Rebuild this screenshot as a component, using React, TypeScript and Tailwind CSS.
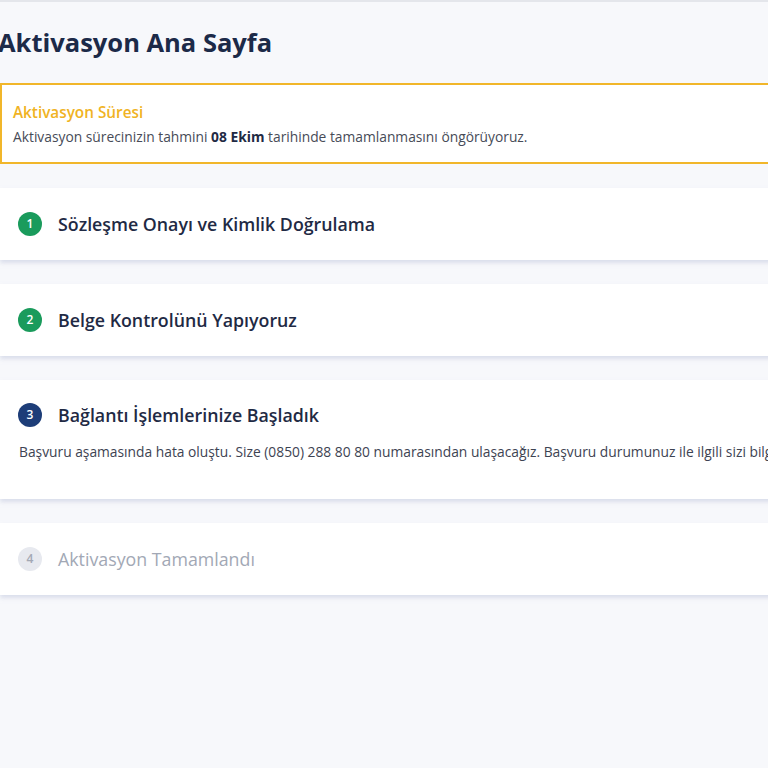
import React from "react";

type Step = {
  no: number;
  title: string;
  state: "done" | "active" | "todo";
  desc?: string;
};

const steps: Step[] = [
  { no: 1, title: "Sözleşme Onayı ve Kimlik Doğrulama", state: "done" },
  { no: 2, title: "Belge Kontrolünü Yapıyoruz", state: "done" },
  {
    no: 3,
    title: "Bağlantı İşlemlerinize Başladık",
    state: "active",
    desc: "Başvuru aşamasında hata oluştu. Size (0850) 288 80 80 numarasından ulaşacağız. Başvuru durumunuz ile ilgili sizi bilgilendireceğiz.",
  },
  { no: 4, title: "Aktivasyon Tamamlandı", state: "todo" },
];

function StepCard({ step }: { step: Step }) {
  const badge =
    step.state === "done"
      ? "bg-[#1a9b5c] text-white"
      : step.state === "active"
      ? "bg-[#1d3d78] text-white"
      : "bg-[#e7e9ef] text-[#a3a8b4]";
  const titleClass =
    step.state === "todo" ? "text-[#a2a8b5] font-normal" : "text-[#1f2a44] font-semibold";

  return (
    <div
      className={`bg-white shadow-[0_3px_4px_rgba(200,205,225,0.6)] px-[18px] ${
        step.desc ? "pt-[23px] pb-[37px]" : "py-6"
      }`}
    >
      <div className="flex items-center h-6 gap-4">
        <div
          className={`w-6 h-6 rounded-full flex items-center justify-center text-[12px] font-semibold ${badge}`}
        >
          {step.no}
        </div>
        <div className={`text-[17.8px] leading-6 ${titleClass}`}>{step.title}</div>
      </div>
      {step.desc && (
        <p className="mt-[15px] text-[13.8px] leading-5 text-[#3d4352] pl-px">{step.desc}</p>
      )}
    </div>
  );
}

export default function App() {
  return (
    <div
      className="w-[768px] h-[768px] overflow-hidden bg-[#f7f8fb] border-t-2 border-[#e4e6eb]"
      style={{ fontFamily: '"Open Sans", "Noto Sans", sans-serif' }}
    >
      <div className="w-[1100px] whitespace-nowrap">
        <h1 className="mt-[24px] ml-[-2px] text-[25.5px] leading-8 font-bold text-[#1c2a48]">
          Aktivasyon Ana Sayfa
        </h1>

        <div className="mt-[25px] border-2 border-[#f1b62a] bg-white px-[11px] pt-[17px] pb-[15px]">
          <div className="text-[15.3px] leading-5 font-semibold text-[#f0b323]">Aktivasyon Süresi</div>
          <div className="mt-[5px] text-[13.8px] leading-5 text-[#474b57]">
            Aktivasyon sürecinizin tahmini <span className="font-bold text-[#1f2a44]">08 Ekim</span>{" "}
            tarihinde tamamlanmasını öngörüyoruz.
          </div>
        </div>

        <div className="mt-6 flex flex-col gap-6">
          {steps.map((s) => (
            <StepCard key={s.no} step={s} />
          ))}
        </div>
      </div>
    </div>
  );
}
